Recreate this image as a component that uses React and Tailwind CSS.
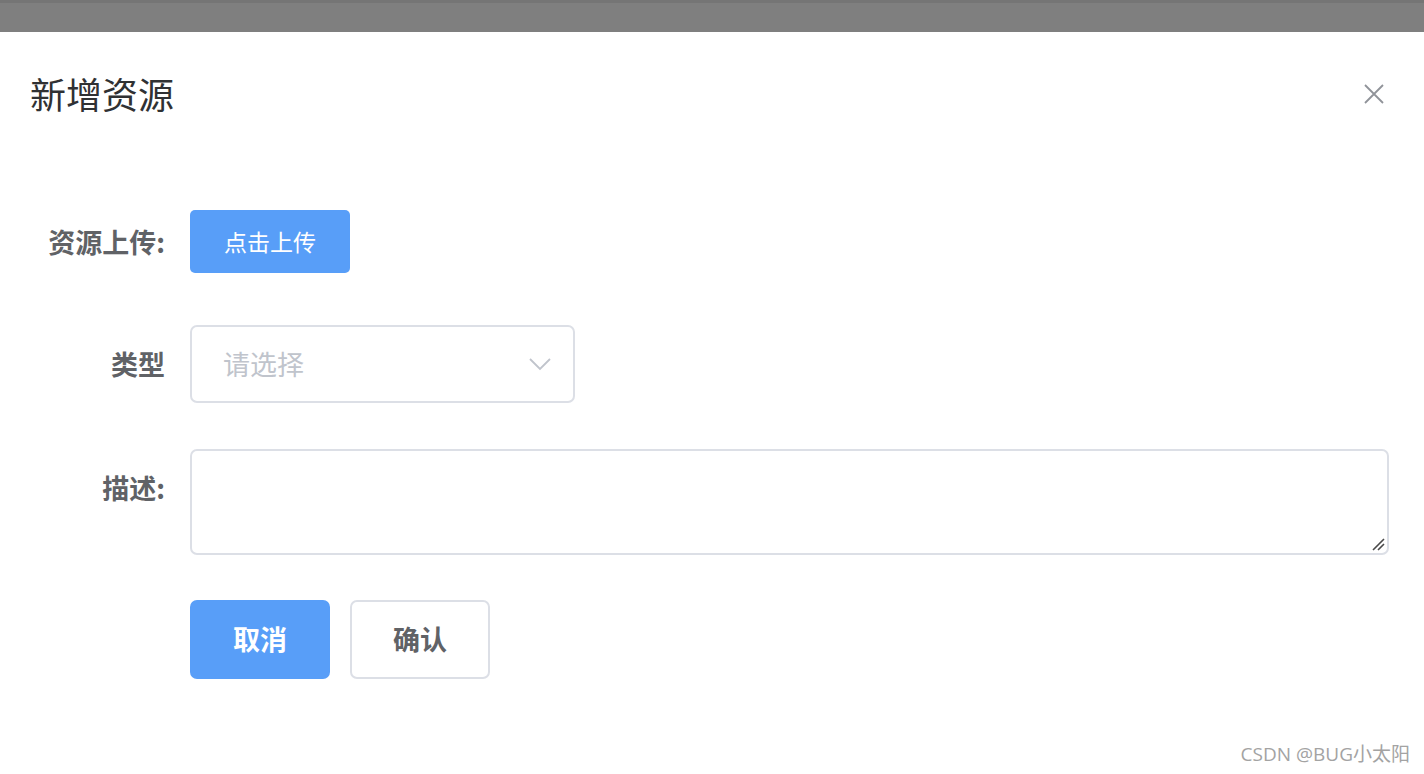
import React from 'react';

const FONT = { fontFamily: '"Noto Sans CJK SC", "Noto Sans", sans-serif' };

const Label = ({ children, className = '' }) => (
  <div className={`w-[190px] shrink-0 pr-[25px] text-right text-[27px] font-bold text-[#606266] leading-[78px] ${className}`}>
    {children}
  </div>
);

export default function App() {
  return (
    <div className="relative h-[774px] w-[1424px] overflow-hidden bg-white" style={FONT}>
      {/* overlay strip */}
      <div className="h-[32px] border-t-[3px] border-[#757575] bg-[#7f7f7f]" />

      {/* header */}
      <div className="flex items-center justify-between pl-[30px] pr-[40px] pt-[37px]">
        <h1 className="text-[36px] leading-[48px] text-[#303133]">新增资源</h1>
        <button className="mt-[2px] flex h-[20px] w-[20px] items-center justify-center text-[#909399]">
          <svg width="20" height="20" viewBox="0 0 20 20" fill="none" stroke="currentColor" strokeWidth="1.8">
            <path d="M1 1L19 19M19 1L1 19" />
          </svg>
        </button>
      </div>

      {/* form */}
      <div className="mt-[86px] pr-[35px]">
        <div className="flex h-[78px] items-center">
          <Label>资源上传:</Label>
          <button className="mb-[1px] h-[63px] w-[160px] rounded-[5px] bg-[#589ef8] text-[23px] text-white">
            点击上传
          </button>
        </div>

        <div className="mt-[44px] flex">
          <Label>类型</Label>
          <div className="flex h-[78px] w-[385px] items-center justify-between rounded-[7px] border-2 border-[#dcdfe6] pl-[31px] pr-[22px]">
            <span className="text-[27px] text-[#c0c4cc]">请选择</span>
            <svg width="22" height="14" viewBox="0 0 22 14" fill="none" stroke="#c0c4cc" strokeWidth="1.8">
              <path d="M1 2L11 12L21 2" />
            </svg>
          </div>
        </div>

        <div className="mt-[46px] flex">
          <Label>描述:</Label>
          <div className="relative flex-1">
            <textarea
              className="block h-[106px] w-full resize-none rounded-[7px] border-2 border-[#dcdfe6] px-[30px] py-[10px] text-[27px] text-[#606266] outline-none"
              style={FONT}
            />
            <svg className="absolute bottom-[4px] right-[4px]" width="14" height="14" viewBox="0 0 14 14" fill="none" stroke="#4a4a4a" strokeWidth="1.6">
              <path d="M2 13L13 2M7 13L13 7" />
            </svg>
          </div>
        </div>

        <div className="mt-[45px] flex gap-[20px] pl-[190px]">
          <button className="h-[79px] w-[140px] rounded-[7px] bg-[#589ef8] text-[27px] font-semibold text-white">
            取消
          </button>
          <button className="h-[79px] w-[140px] rounded-[7px] border-2 border-[#dcdfe6] bg-white text-[27px] font-semibold text-[#606266]">
            确认
          </button>
        </div>
      </div>

      <div
        className="absolute bottom-[6px] right-[14px] text-[19px] text-[#a3a3a3]"
        style={{ fontFamily: '"Open Sans", "Noto Sans CJK SC", sans-serif' }}
      >
        CSDN @BUG小太阳
      </div>
    </div>
  );
}
